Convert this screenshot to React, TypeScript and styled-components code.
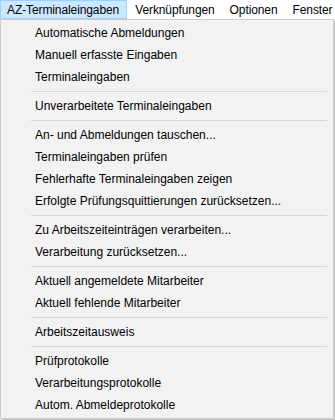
import React from "react";
import styled, { createGlobalStyle } from "styled-components";

const GlobalStyle = createGlobalStyle`
  html, body {
    margin: 0;
    padding: 0;
    background: #ffffff;
  }
  body {
    font-family: "Liberation Sans", Arial, sans-serif;
    font-size: 12px;
    color: #000000;
  }
`;

const Window = styled.div`
  position: relative;
  width: 335px;
  height: 420px;
  overflow: hidden;
  background: #ffffff;
`;

const MenuBar = styled.div`
  display: flex;
  align-items: stretch;
  height: 19px;
  background: #ffffff;
  letter-spacing: -0.1px;
`;

const MenuBarItem = styled.div<{ active?: boolean }>`
  display: flex;
  align-items: center;
  padding: 0 7px 0 6px;
  margin-right: ${(p) => (p.active ? "1px" : "0")};
  border: 1px solid ${(p) => (p.active ? "#99d1ff" : "transparent")};
  background: ${(p) => (p.active ? "#cce8ff" : "transparent")};
  white-space: nowrap;
`;

const Dropdown = styled.div`
  position: absolute;
  left: 0;
  top: 19px;
  width: 332px;
  padding: 2px 0;
  background: #f2f2f2;
  border: 1px solid #cccccc;
  box-shadow: 2px 2px 2px rgba(0, 0, 0, 0.25);
`;

const Item = styled.div`
  display: flex;
  align-items: center;
  height: 22px;
  padding-left: 34px;
  white-space: nowrap;
`;

const Separator = styled.div`
  display: flex;
  align-items: center;
  height: 7px;
  margin: 0 6px 0 30px;

  &::after {
    content: "";
    flex: 1;
    height: 1px;
    background: #d7d7d7;
  }
`;

const groups: string[][] = [
  ["Automatische Abmeldungen", "Manuell erfasste Eingaben", "Terminaleingaben"],
  ["Unverarbeitete Terminaleingaben"],
  [
    "An- und Abmeldungen tauschen...",
    "Terminaleingaben prüfen",
    "Fehlerhafte Terminaleingaben zeigen",
    "Erfolgte Prüfungsquittierungen zurücksetzen...",
  ],
  ["Zu Arbeitszeiteinträgen verarbeiten...", "Verarbeitung zurücksetzen..."],
  ["Aktuell angemeldete Mitarbeiter", "Aktuell fehlende Mitarbeiter"],
  ["Arbeitszeitausweis"],
  ["Prüfprotokolle", "Verarbeitungsprotokolle", "Autom. Abmeldeprotokolle"],
];

const App = () => {
  return (
    <Window>
      <GlobalStyle />
      <MenuBar>
        <MenuBarItem active>AZ-Terminaleingaben</MenuBarItem>
        <MenuBarItem>Verknüpfungen</MenuBarItem>
        <MenuBarItem>Optionen</MenuBarItem>
        <MenuBarItem>Fenster</MenuBarItem>
      </MenuBar>
      <Dropdown>
        {groups.map((group, gi) => (
          <React.Fragment key={gi}>
            {gi > 0 && <Separator />}
            {group.map((label) => (
              <Item key={label}>{label}</Item>
            ))}
          </React.Fragment>
        ))}
      </Dropdown>
    </Window>
  );
};

export default App;
